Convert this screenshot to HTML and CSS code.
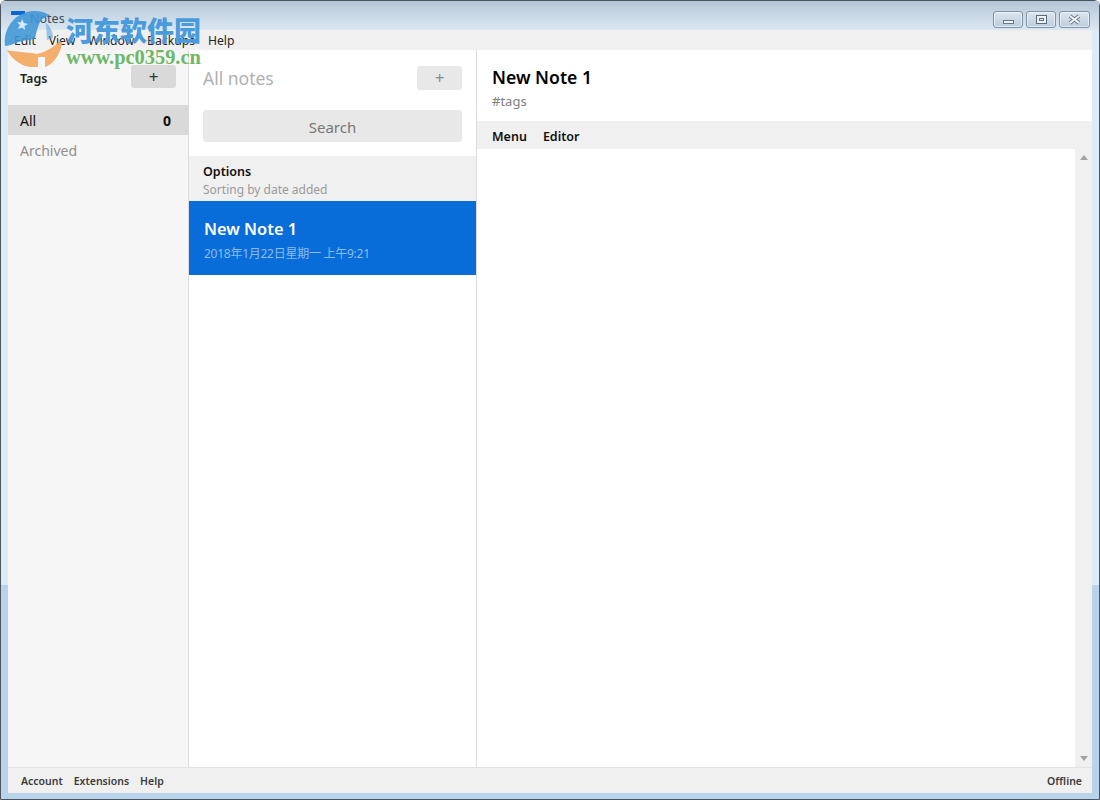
FILE: index.html
```html
<!DOCTYPE html>
<html lang="en">
<head>
<meta charset="utf-8">
<title>Notes</title>
<link rel="stylesheet" href="styles.css">
</head>
<body>
<div class="window">
  <header class="titlebar">
    <span class="app-icon"></span>
    <span class="app-title">Notes</span>
    <div class="controls">
      <button class="ctl ctl-min"><span class="glyph-min"></span></button>
      <button class="ctl ctl-max"><span class="glyph-max"></span></button>
      <button class="ctl ctl-close">
        <svg width="15" height="11" viewBox="0 0 15 11"><path d="M3 2 L12 9 M12 2 L3 9" stroke="#66778a" stroke-width="4"/><path d="M3 2 L12 9 M12 2 L3 9" stroke="#f4f7fa" stroke-width="2"/></svg>
      </button>
    </div>
  </header>
  <nav class="menubar">
    <span>Edit</span><span>View</span><span>Window</span><span>Backups</span><span>Help</span>
  </nav>
  <main class="app">
    <aside class="tags">
      <div class="tags-head">
        <span class="tags-title">Tags</span>
        <button class="add add-dark">+</button>
      </div>
      <div class="tag tag-active"><span>All</span><b>0</b></div>
      <div class="tag tag-muted"><span>Archived</span></div>
    </aside>
    <section class="notes">
      <div class="notes-head">
        <span class="notes-title">All notes</span>
        <button class="add add-light">+</button>
      </div>
      <div class="search-wrap"><div class="search">Search</div></div>
      <div class="options">
        <div class="options-title">Options</div>
        <div class="options-sub">Sorting by date added</div>
      </div>
      <div class="note">
        <div class="note-title">New Note 1</div>
        <div class="note-date">2018年1月22日星期一 上午9:21</div>
      </div>
    </section>
    <section class="editor">
      <div class="editor-head">
        <div class="editor-title">New Note 1</div>
        <div class="editor-tags">#tags</div>
      </div>
      <div class="editor-menu"><span>Menu</span><span>Editor</span></div>
      <div class="editor-body">
        <div class="paper"></div>
        <div class="scrollbar"><i class="arrow-up"></i><i class="arrow-down"></i></div>
      </div>
    </section>
  </main>
  <footer class="footer">
    <div class="footer-left"><span>Account</span><span>Extensions</span><span>Help</span></div>
    <span>Offline</span>
  </footer>
  <div class="watermark">
    <svg class="wm-logo" width="66" height="70" viewBox="0 0 66 70">
      <path d="M5 46 C3 29 14 13 32 11 C39 10.5 45 12 49 15 L41 20 C38 26 36 32 35 39 L22 41 C15 43 10 46 5 46 Z" fill="#3f97d8"/>
      <path d="M46 23 C50 26 53 32 53 38 L47 40 Z" fill="#3f97d8" opacity=".55"/>
      <path d="M22 19 L24 23 L28 24 L24.5 26 L25 30 L22 27.5 L18 29 L20 25 L17 22 L21 22.5 Z" fill="#d8ecf9"/>
      <path d="M7 50 C15 52 27 52 37 54 C46 52 54 47 60 41 L62 43 C60 56 52 65 45 67 L45 57 L38 57 L38 67 L30 67 C19 65 11 58 7 50 Z" fill="#f5a65b"/>
    </svg>
    <div class="wm-cn">河东软件园</div>
    <div class="wm-url">www.pc0359.cn</div>
  </div>
</div>
</body>
</html>
```

FILE: styles.css
```css
* { box-sizing: border-box; }
html, body { margin: 0; padding: 0; }
body {
  width: 1100px;
  height: 800px;
  overflow: hidden;
  background: #fff;
  font-family: "Noto Sans", "Noto Sans CJK SC", sans-serif;
}
button { font-family: inherit; border: 0; padding: 0; }
.window {
  position: relative;
  width: 1100px;
  height: 800px;
  display: flex;
  flex-direction: column;
  padding: 0 7px 6px 7px;
  border: 1px solid #4a5560;
  border-radius: 6px 6px 0 0;
  background: linear-gradient(to bottom, #dcebf7 0, #dcebf7 584px, #b8d3ea 584px, #b8d3ea 100%);
}
.titlebar {
  flex: 0 0 29px;
  margin: 0 -7px;
  padding: 0 7px;
  display: flex;
  align-items: flex-start;
  background: linear-gradient(to bottom, #b4c5d6 0, #c6d5e3 12px, #dbe7f2 29px);
  position: relative;
}
.app-icon {
  width: 14px;
  height: 4px;
  margin: 10px 0 0 3px;
  background: #0a66d6;
}
.app-title {
  margin: 10px 0 0 5px;
  font-size: 12.5px;
  line-height: 15px;
  color: #3d4d5c;
}
.controls {
  margin: 10px 2px 0 auto;
  display: flex;
  gap: 3px;
}
.ctl {
  height: 17px;
  width: 30px;
  display: flex;
  align-items: center;
  justify-content: center;
  border: 1px solid #7f93a8;
  border-radius: 3px;
  background: linear-gradient(to bottom, #dbe6f0, #bccddd);
  box-shadow: inset 0 0 0 1px rgba(255,255,255,.55);
}
.ctl-close { width: 31px; }
.glyph-min {
  width: 11px;
  height: 4px;
  margin-top: 5px;
  background: #eef3f8;
  border: 1px solid #66778a;
}
.glyph-max {
  width: 11px;
  height: 9px;
  border: 1px solid #5b6a78;
  background: #eef3f8;
  box-shadow: inset 0 0 0 2px #eef3f8, inset 0 0 0 3px #5b6a78;
}
.menubar {
  flex: 0 0 20px;
  display: flex;
  align-items: center;
  gap: 12.8px;
  padding: 0 0 0 6px;
  background: #f0f0f0;
  font-size: 12.2px;
  color: #262626;
}
.app {
  flex: 1 1 auto;
  min-height: 0;
  display: flex;
  background: #fff;
}
.tags {
  flex: 0 0 181px;
  background: #f6f6f6;
  border-right: 1px solid #dcdcdc;
}
.tags-head {
  height: 55px;
  display: flex;
  justify-content: space-between;
  padding: 15px 12px 0 12px;
}
.tags-title {
  font-size: 12.5px;
  font-weight: 600;
  line-height: 28px;
  color: #222;
}
.add {
  width: 45px;
  height: 23px;
  border-radius: 3px;
  font-size: 17px;
  line-height: 22px;
  text-align: center;
}
.add-dark { background: #d9d9d9; color: #333; }
.add-light { height: 24px; background: #e8e8e8; color: #8a8a8a; }
.tag {
  height: 30px;
  display: flex;
  align-items: center;
  justify-content: space-between;
  padding: 0 17px 0 12px;
  font-size: 14px;
}
.tag b { font-size: 14px; font-weight: 700; color: #111; }
.tag-active { background: #d9d9d9; color: #111; }
.tag-muted { color: #8f8f8f; }
.notes {
  flex: 0 0 288px;
  border-right: 1px solid #dcdcdc;
  display: flex;
  flex-direction: column;
}
.notes-head {
  height: 60px;
  display: flex;
  justify-content: space-between;
  padding: 16px 14px 0 14px;
}
.notes-title {
  font-size: 17.5px;
  line-height: 24px;
  color: #b0b0b0;
}
.search-wrap { height: 46px; padding: 0 14px; }
.search {
  height: 32px;
  border-radius: 3px;
  background: #e8e8e8;
  color: #777;
  font-size: 15px;
  line-height: 34px;
  text-align: center;
}
.options {
  height: 45px;
  padding: 7px 14px 0;
  background: #f0f0f0;
}
.options-title {
  font-size: 12.5px;
  font-weight: 600;
  line-height: 18px;
  color: #111;
}
.options-sub {
  font-size: 12px;
  line-height: 18px;
  color: #9a9a9a;
}
.note {
  height: 74px;
  padding: 16px 15px 0;
  background: #086cd9;
}
.note-title {
  font-size: 16.4px;
  font-weight: 600;
  line-height: 24px;
  color: #fff;
}
.note-date {
  margin-top: 4px;
  font-size: 12px;
  line-height: 18px;
  color: #8cbcf0;
  letter-spacing: -.26px;
}
.editor {
  flex: 1 1 auto;
  min-width: 0;
  display: flex;
  flex-direction: column;
}
.editor-head {
  height: 71px;
  padding: 14px 15px 0;
}
.editor-title {
  font-size: 17.6px;
  font-weight: 600;
  line-height: 26px;
  color: #000;
}
.editor-tags {
  margin-top: 1px;
  font-size: 13px;
  line-height: 20px;
  color: #808080;
}
.editor-menu {
  height: 28px;
  display: flex;
  align-items: center;
  gap: 16px;
  padding: 2px 15px 0;
  background: #f0f0f0;
  font-size: 12.5px;
  font-weight: 600;
  color: #111;
}
.editor-body {
  flex: 1 1 auto;
  min-height: 0;
  display: flex;
}
.paper { flex: 1 1 auto; }
.scrollbar {
  flex: 0 0 17px;
  background: #f0f0f0;
  display: flex;
  flex-direction: column;
  justify-content: space-between;
  align-items: center;
  padding: 6px 0 6px;
}
.arrow-up, .arrow-down {
  width: 0;
  height: 0;
  border-left: 4px solid transparent;
  border-right: 4px solid transparent;
}
.arrow-up { border-bottom: 5px solid #a3a3a3; }
.arrow-down { border-top: 5px solid #a3a3a3; }
.footer {
  flex: 0 0 26px;
  display: flex;
  justify-content: space-between;
  align-items: center;
  padding: 0 10px 0 13px;
  background: #f0f0f0;
  border-top: 1px solid #e2e2e2;
  font-size: 10.5px;
  font-weight: 600;
  color: #3c3c3c;
}
.footer-left { display: flex; gap: 11px; }
.watermark {
  position: absolute;
  left: -1px;
  top: -1px;
  width: 210px;
  height: 72px;
  pointer-events: none;
}
.wm-logo { position: absolute; left: 0; top: 0; opacity: .88; }
.wm-cn {
  position: absolute;
  left: 66px;
  top: 12px;
  font-family: "Noto Sans CJK SC", sans-serif;
  font-size: 27px;
  font-weight: 900;
  line-height: 36px;
  color: #4a9bdc;
  white-space: nowrap;
}
.wm-url {
  position: absolute;
  left: 66px;
  top: 46px;
  font-family: "Liberation Serif", serif;
  font-size: 20.4px;
  font-weight: 700;
  line-height: 22px;
  color: #6db866;
  white-space: nowrap;
}
```
